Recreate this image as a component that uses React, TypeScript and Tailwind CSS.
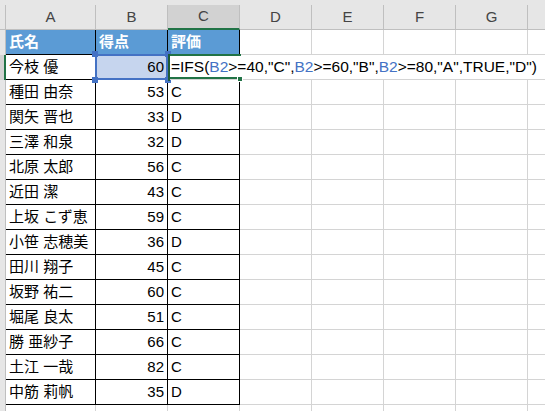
import React from "react";

const rows: [string, number, string][] = [
  ["種田 由奈", 53, "C"],
  ["関矢 晋也", 33, "D"],
  ["三澤 和泉", 32, "D"],
  ["北原 太郎", 56, "C"],
  ["近田 潔", 43, "C"],
  ["上坂 こず恵", 59, "C"],
  ["小笹 志穂美", 36, "D"],
  ["田川 翔子", 45, "C"],
  ["坂野 祐二", 60, "C"],
  ["堀尾 良太", 51, "C"],
  ["勝 亜紗子", 66, "C"],
  ["土江 一哉", 82, "C"],
  ["中筋 莉帆", 35, "D"],
];

function EmptyCells() {
  return (
    <>
      <div className="w-[72px] shrink-0 border-r border-b border-[#d4d4d4]" />
      <div className="w-[72px] shrink-0 border-r border-b border-[#d4d4d4]" />
      <div className="w-[72px] shrink-0 border-r border-b border-[#d4d4d4]" />
      <div className="w-[72px] shrink-0 border-r border-b border-[#d4d4d4]" />
      <div className="flex-1 border-b border-[#d4d4d4]" />
    </>
  );
}

function RowHead({ active }: { active?: boolean }) {
  return active ? (
    <div className="w-[6px] shrink-0 bg-[#d2d2d2] border-r-2 border-[#217346]" />
  ) : (
    <div className="w-[6px] shrink-0 bg-[#e6e6e6] border-r border-[#bfbfbf]" />
  );
}

export default function App() {
  const letters = ["D", "E", "F", "G"];
  return (
    <div className="w-[545px] h-[411px] overflow-hidden bg-white text-[15px] text-black font-['Liberation_Sans','Noto_Sans_CJK_JP',sans-serif]">
      {/* top strip */}
      <div className="h-[5px] bg-[#e6e6e6]" />
      {/* column headers */}
      <div className="flex h-[25px] bg-[#e6e6e6] text-[#444]">
        <div className="w-[6px] shrink-0 border-r border-b border-[#bfbfbf]" />
        <div className="w-[90px] shrink-0 flex items-center justify-center border-r border-b border-[#bfbfbf]">A</div>
        <div className="w-[72px] shrink-0 flex items-center justify-center border-r border-b border-[#bfbfbf]">B</div>
        <div className="w-[72px] shrink-0 flex items-center justify-center bg-[#d2d2d2] border-r border-[#bfbfbf] border-b-2 border-b-[#217346]">C</div>
        {letters.map((l) => (
          <div key={l} className="w-[72px] shrink-0 flex items-center justify-center border-r border-b border-[#bfbfbf]">{l}</div>
        ))}
        <div className="flex-1 border-b border-[#bfbfbf]" />
      </div>

      {/* header row */}
      <div className="flex h-[25px]">
        <RowHead />
        <div className="w-[90px] shrink-0 flex items-center pl-[3px] bg-[#5b9bd5] text-white font-bold border-r border-b border-black">氏名</div>
        <div className="w-[72px] shrink-0 flex items-center pl-[3px] bg-[#5b9bd5] text-white font-bold border-r border-b border-black">得点</div>
        <div className="w-[72px] shrink-0 flex items-center pl-[3px] bg-[#5b9bd5] text-white font-bold border-r border-b border-black">評価</div>
        <EmptyCells />
      </div>

      {/* row 2 editing */}
      <div className="flex h-[25px]">
        <RowHead active />
        <div className="w-[90px] shrink-0 flex items-center pl-[3px] border-r border-b border-black">今枝 優</div>
        <div className="relative w-[72px] shrink-0 flex items-center justify-end pr-[3px] bg-[#c6d5ee] border-r border-b border-black">
          60
          <div className="absolute -left-[1px] -top-[1px] right-[-1px] bottom-[-1px] border-2 border-[#4472c4]" />
          <div className="absolute -left-[4px] -top-[4px] w-[6px] h-[6px] bg-[#4472c4]" />
          <div className="absolute -right-[4px] -top-[4px] w-[6px] h-[6px] bg-[#4472c4]" />
          <div className="absolute -left-[4px] -bottom-[4px] w-[6px] h-[6px] bg-[#4472c4]" />
          <div className="absolute -right-[4px] -bottom-[4px] w-[6px] h-[6px] bg-[#4472c4]" />
        </div>
        <div className="relative flex-1 flex items-center pl-[3px] bg-white border-b border-[#d4d4d4] whitespace-nowrap text-[15.5px]">
          <span>=IFS(</span>
          <span className="text-[#4472c4]">B2</span>
          <span>&gt;=40,"C",</span>
          <span className="text-[#4472c4]">B2</span>
          <span>&gt;=60,"B",</span>
          <span className="text-[#4472c4]">B2</span>
          <span>&gt;=80,"A",TRUE,"D")</span>
          <div className="absolute left-0 -top-[1px] w-[73px] h-[2px] bg-[#217346]" />
          <div className="absolute left-0 bottom-[0px] w-[73px] h-[2px] bg-[#217346]" />
          <div className="absolute left-0 -top-[1px] w-[2px] h-[27px] bg-[#1e5c38]" />
          <div className="absolute left-[69px] -bottom-[3px] w-[6px] h-[6px] bg-[#217346] border border-white" />
        </div>
      </div>

      {rows.map(([name, score, grade]) => (
        <div key={name} className="flex h-[25px]">
          <RowHead />
          <div className="w-[90px] shrink-0 flex items-center pl-[3px] border-r border-b border-black whitespace-nowrap">{name}</div>
          <div className="w-[72px] shrink-0 flex items-center justify-end pr-[3px] border-r border-b border-black">{score}</div>
          <div className="w-[72px] shrink-0 flex items-center pl-[3px] border-r border-b border-black">{grade}</div>
          <EmptyCells />
        </div>
      ))}

      {/* partial row */}
      <div className="flex h-[25px]">
        <RowHead />
        <div className="w-[90px] shrink-0 border-r border-b border-[#d4d4d4]" />
        <div className="w-[72px] shrink-0 border-r border-b border-[#d4d4d4]" />
        <div className="w-[72px] shrink-0 border-r border-b border-[#d4d4d4]" />
        <EmptyCells />
      </div>
    </div>
  );
}
